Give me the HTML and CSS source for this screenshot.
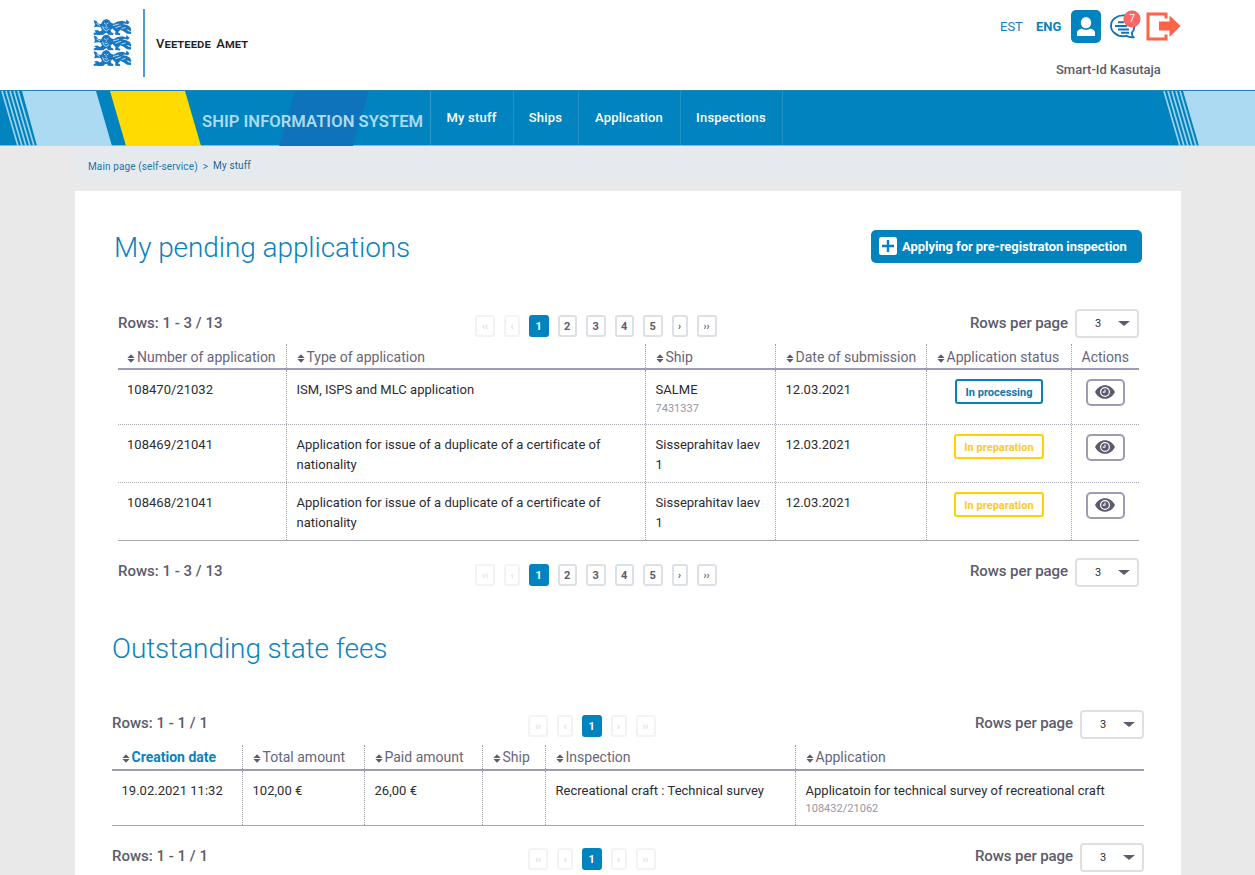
FILE: index.html
```html
<!DOCTYPE html>
<html lang="en">
<head>
<meta charset="utf-8">
<title>Ship Information System</title>
<link rel="stylesheet" href="styles.css">
</head>
<body>
<svg class="defs" width="0" height="0" aria-hidden="true">
  <symbol id="sort" viewBox="0 0 8 10"><path d="M4 .3 8 4.500H0zM4 9.700 0 5.500h8z"/></symbol>
  <symbol id="eye" viewBox="0 0 20 14"><path fill-rule="evenodd" d="M0 7C2.300 2.400 5.900.2 10 .2S17.700 2.400 20 7c-2.300 4.600-5.900 6.800-10 6.800S2.300 11.600 0 7zm10-5a5 5 0 1 0 0 10 5 5 0 0 0 0-10z"/><circle cx="10" cy="7" r="3.800"/><path class="glint" d="M7.800 6.800A2.200 2.200 0 0 0 10 7V4.600"/></symbol>
  <symbol id="lion" viewBox="0 0 38 16"><path d="M0 1l3 1 1.500 2.500 3 .5L9.500 1.500 12.500 0 15.500 1l1.500 2.300L20 4.800l4-2.300 5-.7 3.500 1.200L33 .5l3 2.700-1.500 2-3-.7-3 .5 4.500.8 3.500 2 1.500 3.200-1.500 1.500-1-1.500-2.500-.5 2.500 2 2.500.3-.5 2.200-4-.3-3.500-2.500-3-1.500-2.500 2.500 2.500 1.500-1 1.700-4.500-.8.5-3L19 9.500l-2 1.500 1 2.500 2 .5-.5 2-5-.3-1-2-2 .5-1.500 1.500-4 .5-3.500-.5-2.500.3L0 14l2.500-.8L.5 11.500l3.500-.5 2.500 1.500 2-1.500-1.500-3L4 7.700.5 8.300 1.500 5.700z"/><path class="lion-detail" d="M10.500 4l1.800 1.200M13 5.200L14.800 4M12.700 6v1.500M11 8.500l1.700.7 1.600-.7M9 7l1.200 3.300L12.700 12l3-2M19.500 6.500l6-1.500M22 8.800l5.500-2M28 9.500l4-1M3 4.500l3.500 2"/></symbol>
</svg>

<header class="top">
  <div class="brand">
    <svg class="crest" viewBox="0 0 38 48"><use href="#lion" width="38" height="16"/><use href="#lion" y="15.500" width="38" height="16"/><use href="#lion" y="31" width="38" height="16"/></svg>
    <span class="brand-rule"></span>
    <span class="brand-name">Veeteede Amet</span>
  </div>
  <div class="account">
    <div class="tools">
      <a class="lang">EST</a>
      <a class="lang lang-on">ENG</a>
      <span class="profile"><svg viewBox="0 0 20 20"><ellipse cx="10" cy="5.700" rx="5.200" ry="5.600"/><path d="M1 19v-3.500c0-1.800 1.500-2.800 5-3.900 1.200 1 2.500 1.400 4 1.400s2.800-.4 4-1.400c3.500 1.100 5 2.100 5 3.900V19z"/></svg></span>
      <span class="messages">
        <svg viewBox="0 0 28 26"><path d="M16 1.500C8 .8 2 5.500 2 11.700c0 3 1.300 5.500 3.500 7.300C8 21.300 11 22.300 14 22.300c1.500 0 2.500-.1 3.500-.4 1.800 1 4.300 1.500 6.800 1.300-1.200-1.500-1.600-3-1.300-4.700 1.600-1.600 2.300-3.500 2.300-5.500"/><path d="M9 8.200h6M6 12h12M9 15.500h11M12 18.700h8"/></svg>
        <span class="count">7</span>
      </span>
      <svg class="logout" viewBox="0 0 35 29"><path class="logout-frame" d="M20 6.500V2H2v25h18v-4.500"/><path d="M13 9.500h10.500V3.500L34.500 14 23.500 25v-6.500H13z"/></svg>
    </div>
    <div class="user">Smart-Id Kasutaja</div>
  </div>
</header>

<nav class="nav">
  <svg class="nav-art" viewBox="0 0 1255 55" aria-hidden="true">
    <path class="deep" d="M295 0h74l-16 55h-74z"/>
    <path class="pale" d="M22 0h74l16 55H37zM1183 0h72v55h-56z"/>
    <path class="yellow" d="M110 0h75l16 55h-75z"/>
    <path class="stripes" d="M2 0l16 55M6 0l16 55M10 0l16 55M14 0l16 55M18 0l16 55M1164 0l16 55M1168 0l16 55M1172 0l16 55M1176 0l16 55M1180 0l16 55"/>
  </svg>
  <div class="nav-row">
    <span class="system"><span>SHIP INFORMATION SYSTEM</span></span>
    <a class="w83">My stuff</a><a class="w65">Ships</a><a class="w102">Application</a><a class="w102">Inspections</a>
  </div>
</nav>

<div class="crumbs"><a>Main page (self-service)</a><span class="gt">&gt;</span><span class="here">My stuff</span></div>

<main class="sheet">
  <section class="pending">
    <div class="heading">
      <h1>My pending applications</h1>
      <a class="apply"><svg viewBox="0 0 18 18"><rect width="18" height="18" rx="2.500"/><path d="M9 3v12M3 9h12"/></svg><span>Applying for pre-registraton inspection</span></a>
    </div>
    <div class="bar">
      <span class="rows">Rows: 1 - 3 / 13</span>
      <div class="pager"><i class="off p20">‹‹</i><i class="off p16">‹</i><i class="on">1</i><i>2</i><i>3</i><i>4</i><i>5</i><i class="p16">›</i><i class="p20">››</i></div>
      <span class="per">Rows per page</span><span class="select">3<b></b></span>
    </div>
    <div class="table t1">
      <div class="tr th"><span><svg><use href="#sort"/></svg>Number of application</span><span><svg><use href="#sort"/></svg>Type of application</span><span><svg><use href="#sort"/></svg>Ship</span><span><svg><use href="#sort"/></svg>Date of submission</span><span><svg><use href="#sort"/></svg>Application status</span><span>Actions</span></div>
      <div class="tr short"><div>108470/21032</div><div>ISM, ISPS and MLC application</div><div>SALME<small>7431337</small></div><div>12.03.2021</div><div class="mid"><em class="status blue">In processing</em></div><div class="mid"><a class="view"><svg><use href="#eye"/></svg></a></div></div>
      <div class="tr"><div>108469/21041</div><div>Application for issue of a duplicate of a certificate of<br>nationality</div><div>Sisseprahitav laev<br>1</div><div>12.03.2021</div><div class="mid"><em class="status">In preparation</em></div><div class="mid"><a class="view"><svg><use href="#eye"/></svg></a></div></div>
      <div class="tr last"><div>108468/21041</div><div>Application for issue of a duplicate of a certificate of<br>nationality</div><div>Sisseprahitav laev<br>1</div><div>12.03.2021</div><div class="mid"><em class="status">In preparation</em></div><div class="mid"><a class="view"><svg><use href="#eye"/></svg></a></div></div>
    </div>
    <div class="bar bar-end">
      <span class="rows">Rows: 1 - 3 / 13</span>
      <div class="pager"><i class="off p20">‹‹</i><i class="off p16">‹</i><i class="on">1</i><i>2</i><i>3</i><i>4</i><i>5</i><i class="p16">›</i><i class="p20">››</i></div>
      <span class="per">Rows per page</span><span class="select">3<b></b></span>
    </div>
  </section>

  <section class="fees">
    <div class="heading"><h1>Outstanding state fees</h1></div>
    <div class="bar">
      <span class="rows">Rows: 1 - 1 / 1</span>
      <div class="pager"><i class="off p20">‹‹</i><i class="off p16">‹</i><i class="on">1</i><i class="off p16">›</i><i class="off p20">››</i></div>
      <span class="per">Rows per page</span><span class="select">3<b></b></span>
    </div>
    <div class="table t2">
      <div class="tr th"><span class="sorted"><svg><use href="#sort"/></svg>Creation date</span><span><svg><use href="#sort"/></svg>Total amount</span><span><svg><use href="#sort"/></svg>Paid amount</span><span><svg><use href="#sort"/></svg>Ship</span><span><svg><use href="#sort"/></svg>Inspection</span><span><svg><use href="#sort"/></svg>Application</span></div>
      <div class="tr last"><div>19.02.2021 11:32</div><div>102,00 €</div><div>26,00 €</div><div></div><div>Recreational craft : Technical survey</div><div>Applicatoin for technical survey of recreational craft<small>108432/21062</small></div></div>
    </div>
    <div class="bar bar-end">
      <span class="rows">Rows: 1 - 1 / 1</span>
      <div class="pager"><i class="off p20">‹‹</i><i class="off p16">‹</i><i class="on">1</i><i class="off p16">›</i><i class="off p20">››</i></div>
      <span class="per">Rows per page</span><span class="select">3<b></b></span>
    </div>
  </section>
</main>
</body>
</html>
```

FILE: styles.css
```css
* { box-sizing: border-box; }
html { height: 875px; overflow: hidden; }
body { margin: 0; width: 1255px; height: 875px; overflow: hidden; background: #e9e9e9; color: #2c2c33; font: 13px/20px Roboto, "Liberation Sans", sans-serif; white-space: nowrap; }
.defs { display: block; height: 0; }

.top { display: flex; justify-content: space-between; height: 90px; padding: 0 73px 0 93px; background: #fff; }
.brand { display: flex; align-items: flex-start; padding-top: 9px; }
.crest { width: 39px; height: 48px; margin: 10px 11px 0 0; fill: #1b78c0; }
.lion-detail { fill: none; stroke: #fff; stroke-width: .7; }
.brand-rule { width: 2px; height: 68px; background: #4f9ccf; }
.brand-name { margin: 25px 0 0 11px; font-size: 13px; font-weight: 500; font-variant: small-caps; color: #222; letter-spacing: .1px; word-spacing: 2px; }
.account { width: 182px; }
.tools { display: flex; padding-top: 10px; }
.lang { width: 36px; padding-top: 7px; font-size: 13px; color: #0b82bc; }
.lang-on { width: 35px; font-weight: 700; }
.profile { width: 30px; height: 33px; padding: 7px 5px; border-radius: 5px; background: #0083be; }
.profile svg { display: block; width: 20px; height: 20px; fill: #fff; }
.messages { position: relative; width: 28px; margin-left: 8px; padding-top: 4px; }
.messages svg { display: block; width: 28px; height: 26px; fill: none; stroke: #1274b8; stroke-width: 1.9; }
.count { position: absolute; left: 15px; top: 1px; width: 16px; height: 16px; border-radius: 8px; background: #ff6666; box-shadow: 0 0 0 .5px #b66; color: #fff; font-size: 10px; line-height: 16px; text-align: center; }
.logout { width: 35px; height: 29px; margin: 2px 0 0 9px; fill: #ff6347; }
.logout-frame { fill: none; stroke: #ff6347; stroke-width: 3; }
.user { padding: 17px 0 0 56px; font-size: 13px; font-weight: 500; color: #5b5b6b; }

.nav { position: relative; height: 56px; background: #0083be; border-top: 1px solid #1b86b8; border-bottom: 1px solid #7fbddb; }
.nav-art { position: absolute; left: 0; top: 0; width: 1255px; height: 55px; }
.deep { fill: #0f73bc; }
.pale { fill: #abdaf2; }
.yellow { fill: #ffdb00; }
.stripes { stroke: #9ed2ec; stroke-width: 1.7; fill: none; }
.nav-row { position: relative; display: flex; height: 54px; }
.system { width: 431px; padding: 21px 0 0 202px; border-right: 1px solid #3399cb; font-size: 16.6px; font-weight: 600; letter-spacing: .03px; color: #abdaf2; }
.nav-row a { padding: 17px 1px 0 0; border-right: 1px solid #2590c5; font-size: 13px; font-weight: 500; letter-spacing: .2px; color: #fff; text-align: center; }
.w83 { width: 83px; }
.w65 { width: 65px; }
.w102 { width: 102px; }

.crumbs { display: flex; height: 38px; margin: 0 74px 7px 75px; padding: 11px 0 0 13px; background: #e6eaee; color: #1b76a8; font-size: 10px; letter-spacing: .12px; }
.gt { margin: 0 5px; }
.here { margin-top: -1px; color: #1c6690; }

.sheet { height: 684px; margin: 0 74px 0 75px; background: #fff; }
.pending { height: 400px; padding: 39px 42px 0 43px; }
.fees { padding: 40px 37px 0 37px; }
.heading { display: flex; justify-content: space-between; align-items: flex-start; height: 78px; }
h1 { margin: 0 0 0 -4px; padding-top: 1px; font-size: 28px; line-height: 34px; font-weight: 300; letter-spacing: -.08px; color: #0b82bc; }
.fees h1 { margin-left: 0; }
.apply { display: flex; gap: 5px; width: 271px; height: 33px; margin-right: -3px; padding: 7px 0 0 8px; border-radius: 5px; background: #0083be; color: #fff; font-size: 13px; font-weight: 700; line-height: 19px; letter-spacing: -.05px; }
.apply svg { width: 18px; height: 18px; fill: #fff; stroke: #0083be; }
.apply rect { stroke: none; }
.apply path { stroke-width: 2.4; }

.bar { display: flex; height: 36px; padding-top: 1px; }
.rows { width: 357px; padding-top: 4px; font-size: 15px; font-weight: 500; color: #5c5c6c; }
.fees .rows { width: 416px; }
.fees .rows, .fees .per { padding-top: 3px; }
.bar .pager { display: flex; gap: 9px; flex: 1; padding-top: 6px; }
.fees .pager { padding-top: 5px; }
.pager i { width: 19.500px; height: 22px; border: 2px solid #dde1e5; border-radius: 3px; font-style: normal; font-size: 11px; line-height: 19px; font-weight: 700; color: #5b5b6b; text-align: center; }
.pager .p16 { width: 16px; font-size: 10px; }
.pager .p20 { width: 20px; font-size: 10px; }
.pager .off { border-color: #f2f3f4; color: #dcdce0; }
.pager .on { border-color: #0083be; background: #0083be; color: #fff; }
.per { padding-top: 4px; font-size: 15px; font-weight: 500; letter-spacing: -.08px; color: #5c5c6c; }
.select { display: flex; align-items: center; gap: 17px; width: 64px; height: 29px; margin-left: 7px; padding-left: 18px; border: 2px solid #dde1e5; border-radius: 4px; font-size: 11px; }
.select b { border: solid transparent; border-width: 5px 6.500px 0; border-top-color: #5c5c70; }
.bar-end { padding-top: 17px; height: 47px; }
.bar-end .rows, .bar-end .per { padding-top: 3px; }
.pending .bar-end { height: 70px; }

.table { color: #2c2c33; }
.tr { display: grid; height: 58px; border-bottom: 1px dotted #a5a5b8; }
.t1 .tr { grid-template-columns: 169px 359px 130px 151px 145px 67px; }
.t2 .tr { grid-template-columns: 131px 122px 118px 63px 250px 348px; }
.tr > * { padding: 10px 0 0 9px; border-right: 1px dotted #9a9aaf; letter-spacing: .02px; }
.tr > *:last-child { border-right: 0; }
.tr.short { height: 55px; }
.tr.last { border-bottom: 1px solid #a5a5b8; }
.t2 .tr.last { height: 55px; }
.tr.th { height: 26px; border-bottom: 2px solid #9c9cb5; color: #66667a; font-size: 14px; }
.tr.th > span { padding-top: 3px; letter-spacing: 0; }
.t2 .tr.th > span { padding-top: 2px; }
.th svg { width: 8px; height: 9px; margin-right: 2px; vertical-align: -1px; fill: #5c5c6c; }
.t1 .tr > :not(:first-child), .t2 .tr > * { padding-left: 9.500px; }
.th .sorted { font-weight: 700; color: #0b82bc; }
small { display: block; margin-top: 0; font-size: 11px; line-height: 17px; color: #9696a5; }
.t2 small { margin-top: -1px; }
.tr > .mid { display: flex; justify-content: center; align-items: flex-start; padding-top: 9px; padding-left: 0 !important; }
.status { height: 25px; padding: 0 8.500px; border: 2px solid #ffd200; border-radius: 3px; color: #ffc91f; font-size: 11px; line-height: 23px; font-style: normal; font-weight: 700; }
.status.blue { border-color: #0083be; color: #0b78b0; }
.view { width: 39px; height: 27px; border: 2px solid #9c9cb5; border-radius: 5px; padding: 4px 7px; }
.view svg { display: block; width: 20px; height: 14px; fill: #5b5b6b; }
.glint { fill: none; stroke: #fff; stroke-width: 1.1; }
```
